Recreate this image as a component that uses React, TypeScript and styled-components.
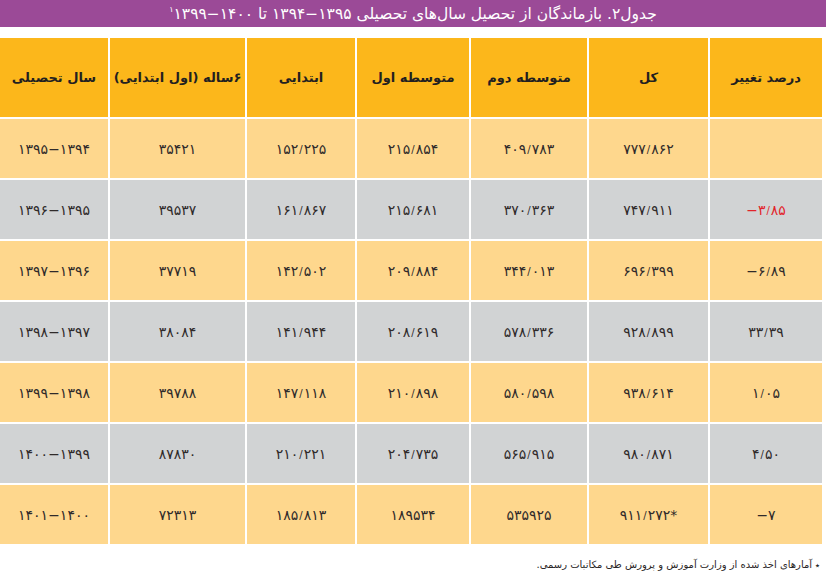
import React from "react"
import styled, { createGlobalStyle } from "styled-components"

const GlobalStyle = createGlobalStyle`
  html, body {
    margin: 0;
    padding: 0;
    background: #ffffff;
  }
  body {
    font-family: "DejaVu Sans", "Noto Sans", sans-serif;
    color: #2b2727;
  }
`

const Page = styled.div`
  width: 826px;
  height: 579px;
  display: flex;
  flex-direction: column;
  overflow: hidden;
`

const TitleBar = styled.div`
  height: 27px;
  background: #9b4a97;
  display: flex;
  align-items: center;
  justify-content: center;
  direction: rtl;
`

const Title = styled.h1`
  margin: 0;
  font-size: 15.5px;
  font-weight: normal;
  color: #ffffff;
  white-space: nowrap;
  letter-spacing: -0.2px;
`

const Years = styled.bdi`
  direction: ltr;
  unicode-bidi: isolate;
`

const Sup = styled.sup`
  font-size: 8px;
  vertical-align: 7px;
`

const Table = styled.div`
  margin-top: 11px;
  width: 822px;
  display: grid;
  direction: rtl;
  grid-template-columns: 112px 119px 116px 112px 108px 135px 108px;
  grid-template-rows: 79px repeat(7, 59px);
  gap: 2px;
`

const HeadCell = styled.div`
  background: #fcb71b;
  display: flex;
  align-items: center;
  justify-content: center;
  font-size: 13px;
  font-weight: bold;
  color: #231f20;
  white-space: nowrap;
`

const Cell = styled.div<{ $tone: "light" | "gray"; $negative?: boolean }>`
  background: ${(p) => (p.$tone === "light" ? "#fed78d" : "#d1d3d4")};
  display: flex;
  align-items: center;
  justify-content: center;
  direction: ltr;
  font-size: 14px;
  color: ${(p) => (p.$negative ? "#e2232a" : "#2f2a2a")};
  white-space: nowrap;
`

const Sep = styled.span`
  font-size: 10px;
  display: inline-block;
  transform: translateY(1px);
  margin: 0 1px;
`

const Footnote = styled.p`
  margin: 15px 6px 0 0;
  direction: rtl;
  text-align: right;
  font-size: 10px;
  color: #2b2727;
`

const Star = styled.span`
  font-size: 9px;
  margin-left: 3px;
`

const headers = [
  "درصد تغییر",
  "کل",
  "متوسطه دوم",
  "متوسطه اول",
  "ابتدایی",
  "۶ساله (اول ابتدایی)",
  "سال تحصیلی",
]

// each row is listed right to left, like the table itself
const rows: { cells: string[]; red?: boolean }[] = [
  { cells: ["", "۷۷۷/۸۶۲", "۴۰۹/۷۸۳", "۲۱۵/۸۵۴", "۱۵۲/۲۲۵", "۳۵۴۲۱", "۱۳۹۵−۱۳۹۴"] },
  { cells: ["−۳/۸۵", "۷۴۷/۹۱۱", "۳۷۰/۳۶۳", "۲۱۵/۶۸۱", "۱۶۱/۸۶۷", "۳۹۵۳۷", "۱۳۹۶−۱۳۹۵"], red: true },
  { cells: ["−۶/۸۹", "۶۹۶/۳۹۹", "۳۴۴/۰۱۳", "۲۰۹/۸۸۴", "۱۴۲/۵۰۲", "۳۷۷۱۹", "۱۳۹۷−۱۳۹۶"] },
  { cells: ["۳۳/۳۹", "۹۲۸/۸۹۹", "۵۷۸/۳۳۶", "۲۰۸/۶۱۹", "۱۴۱/۹۴۴", "۳۸۰۸۴", "۱۳۹۸−۱۳۹۷"] },
  { cells: ["۱/۰۵", "۹۳۸/۶۱۴", "۵۸۰/۵۹۸", "۲۱۰/۸۹۸", "۱۴۷/۱۱۸", "۳۹۷۸۸", "۱۳۹۹−۱۳۹۸"] },
  { cells: ["۴/۵۰", "۹۸۰/۸۷۱", "۵۶۵/۹۱۵", "۲۰۴/۷۳۵", "۲۱۰/۲۲۱", "۸۷۸۳۰", "۱۴۰۰−۱۳۹۹"] },
  { cells: ["−۷", "۹۱۱/۲۷۲*", "۵۳۵۹۲۵", "۱۸۹۵۳۴", "۱۸۵/۸۱۳", "۷۲۳۱۳", "۱۴۰۱−۱۴۰۰"] },
]

function Value({ text }: { text: string }) {
  const parts = text.split("/")
  return (
    <>
      {parts.map((part, k) => (
        <React.Fragment key={k}>
          {k > 0 && <Sep>/</Sep>}
          {part}
        </React.Fragment>
      ))}
    </>
  )
}

export default function App() {
  return (
    <Page>
      <GlobalStyle />
      <TitleBar>
        <Title>
          جدول۲. بازماندگان از تحصیل سال‌های تحصیلی <Years>۱۳۹۴−۱۳۹۵</Years> تا{" "}
          <Years>۱۳۹۹−۱۴۰۰</Years>
          <Sup>۱</Sup>
        </Title>
      </TitleBar>

      <Table>
        {headers.map((h) => (
          <HeadCell key={h}>{h}</HeadCell>
        ))}
        {rows.map((row, i) =>
          row.cells.map((value, j) => (
            <Cell
              key={`${i}-${j}`}
              $tone={i % 2 === 0 ? "light" : "gray"}
              $negative={row.red && j === 0}
            >
              <Value text={value} />
            </Cell>
          ))
        )}
      </Table>

      <Footnote>
        <Star>٭</Star>آمارهای اخذ شده از وزارت آموزش و پرورش طی مکاتبات رسمی.
      </Footnote>
    </Page>
  )
}
